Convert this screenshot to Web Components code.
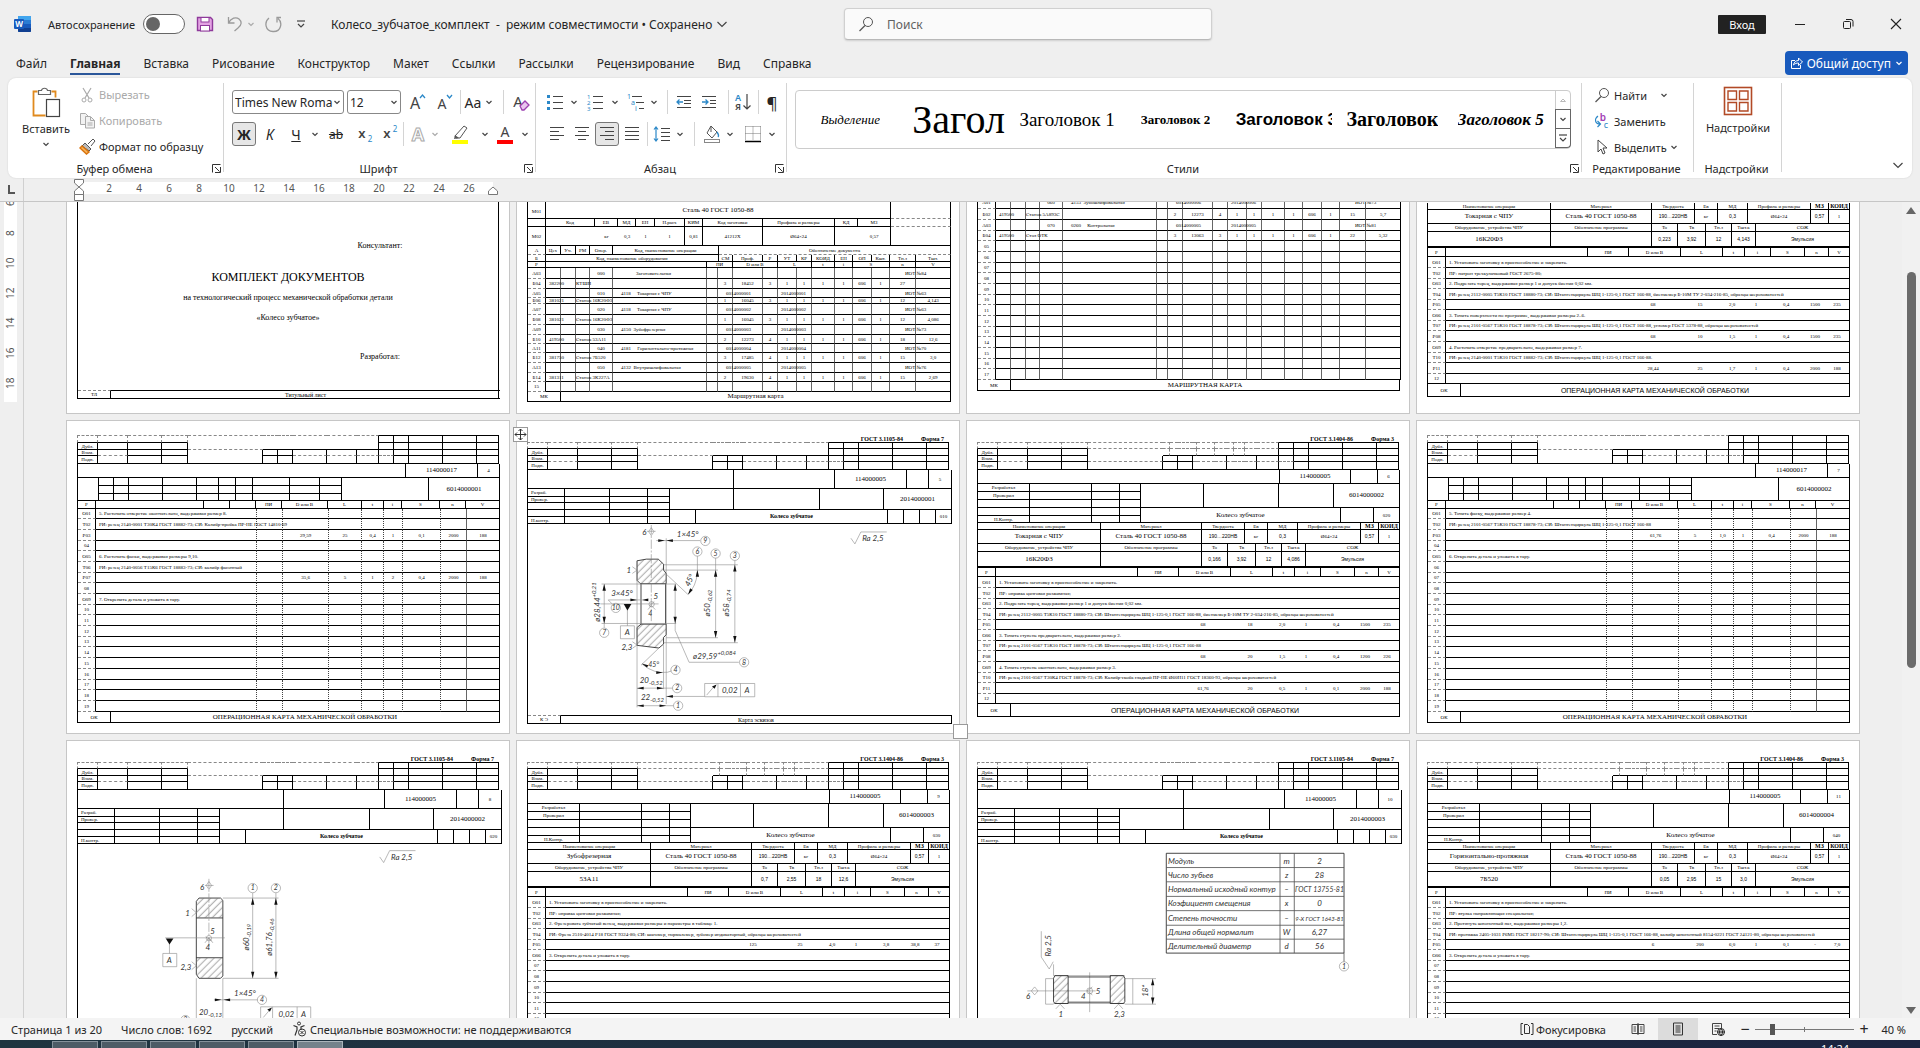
<!DOCTYPE html>
<html lang="ru">
<head>
<meta charset="utf-8">
<title>Колесо_зубчатое_комплект - Word</title>
<style>
html,body{height:100%}
body{margin:0;overflow:hidden;background:#efefef;font-family:"Noto Sans","Open Sans",sans-serif;font-size:12px;color:#262626}
</style>
</head>
<body>
<word-app></word-app>
<script>
const BASE = `*{box-sizing:border-box}button{font:inherit;color:inherit;background:none;border:0;padding:0;margin:0;display:inline-flex;align-items:center;justify-content:center}`;
class Base extends HTMLElement {
  connectedCallback() {
    if (this.shadowRoot) return;
    this.attachShadow({ mode: 'open' }).innerHTML = `<style>${BASE}${this.css()}</style>${this.html()}`;
  }
  css() { return ':host{display:block}'; }
  html() { return '<slot></slot>'; }
}
const def = (n, css, html) => customElements.define(n, class extends Base {
  css() { return typeof css === 'function' ? css(this) : css; }
  html() { return typeof html === 'function' ? html(this) : html; }
});

/* ---------- icons ---------- */
const G = '#444', B = '#2b88c8';
const lines = (a, c = G) => a.map(([x, y, w]) => `<path d="M${x} ${y}h${w}" stroke="${c}"/>`).join('');
const ICONS = {
  word: [18, 18, `<rect x="4" y="1" width="13" height="16" rx="1" fill="#2b7cd3"/><path d="M4 2a1 1 0 0 1 1-1h11a1 1 0 0 1 1 1v3H4z" fill="#41a5ee"/><path d="M4 9h13v4H4z" fill="#185abd"/><path d="M4 13h13v3a1 1 0 0 1-1 1H5a1 1 0 0 1-1-1z" fill="#103f91"/><rect x="0" y="4" width="10" height="10" rx="1" fill="#185abd"/><text x="5" y="12" font-size="8" font-weight="700" fill="#fff" text-anchor="middle" font-family="Open Sans,sans-serif">W</text>`],
  save: [18, 18, `<path d="M1.5 2.5h13l2 2v11h-15z" fill="#e3a3e3" stroke="#8f3a9b" stroke-width="1.4"/><rect x="5" y="2.5" width="8" height="4.5" fill="#fff" stroke="#8f3a9b"/><rect x="4.5" y="10.5" width="9" height="5.5" fill="#fff" stroke="#8f3a9b"/>`],
  undo: [18, 18, `<path d="M2.5 2v6h6M2.5 8C5 3 10 1.5 13 4s3 6-1 9l-3.5 3" stroke="#9a9a9a" stroke-width="1.3" fill="none"/>`],
  redo: [18, 18, `<path d="M5 3C0 7 1 16 9 16.5s10-9 5-13M13 7.5V2.500h4" stroke="#9a9a9a" stroke-width="1.3" fill="none"/>`],
  custom: [10, 10, `<path d="M1 2h8" stroke="${G}" stroke-width="1.2"/><path d="M2 5l3 3 3-3" stroke="${G}" stroke-width="1.2" fill="none"/>`],
  chev: [8, 8, `<path d="M1.5 3L4 5.500 6.500 3" stroke="${G}" stroke-width="1.2" fill="none"/>`],
  chevg: [8, 8, `<path d="M1.5 3L4 5.500 6.500 3" stroke="#aaa" stroke-width="1.2" fill="none"/>`],
  chevw: [8, 8, `<path d="M1.5 3L4 5.500 6.500 3" stroke="#fff" stroke-width="1.2" fill="none"/>`],
  chevl: [12, 12, `<path d="M1.5 4L6 8.500 10.500 4" stroke="${G}" stroke-width="1.2" fill="none"/>`],
  up: [8, 8, `<path d="M1.5 5.500L4 3l2.500 2.500z" stroke="#bbb" fill="none"/>`],
  search: [16, 16, `<circle cx="10" cy="6" r="4.5" stroke="#555" fill="none"/><path d="M7 9.500L1.500 15" stroke="#555" stroke-width="1.2"/>`],
  min: [12, 12, `<path d="M1 6.500h10" stroke="#222"/>`],
  restore: [12, 12, `<rect x="1.5" y="3.5" width="7" height="7" rx="1" fill="none" stroke="#222"/><path d="M4 1.500h5a2 2 0 0 1 2 2v5" fill="none" stroke="#222"/>`],
  close: [12, 12, `<path d="M1 1l10 10M11 1L1 11" stroke="#222" stroke-width="1.1"/>`],
  share: [13, 14, `<path d="M5 4.500H1.500v8h9V9M3.500 9C4 6 6 4.500 8.500 4.500V2l4 4-4 3.500V7C6.500 7 5 7.500 3.500 9z" fill="none" stroke="#fff"/>`],
  paste: [30, 31, `<path d="M6.500 4.500h-4v24h12M20.500 4.500h4v6" fill="none" stroke="#e08a1e" stroke-width="1.8"/><path d="M7.500 7.500v-4h3c.5-3 5.500-3 6 0h3v4z" fill="#fff" stroke="#666" stroke-width="1.2"/><rect x="15.5" y="12.5" width="13" height="17" fill="#fff" stroke="#444" stroke-width="1.2"/>`],
  cut: [14, 16, `<path d="M3 1l6 10M11 1L5 11" stroke="#aaa" stroke-width="1.2"/><circle cx="4" cy="13" r="2" fill="none" stroke="#aaa"/><circle cx="10" cy="13" r="2" fill="none" stroke="#aaa"/>`],
  copy: [17, 17, `<path d="M6 12.500H1.500v-11h5l3 3" fill="#f2f2f2" stroke="#aaa"/><path d="M6.500 4.500h5l4 4v7.500h-9z" fill="#f2f2f2" stroke="#aaa"/><path d="M11.500 5v3.500h4M8.500 11h5M8.500 13h5" stroke="#aaa" fill="none"/>`],
  brush: [17, 17, `<path d="M9 6l5-5 2 2-4 5" fill="#fff" stroke="#555"/><path d="M6 5l6 6-2 2-7-5z" fill="#bbb" stroke="#555"/><path d="M3 8l7 6-2.500 2L1 10z" fill="#f6b45c" stroke="#d9730d" stroke-width="1.4"/>`],
  grow: [18, 20, `<text x="7" y="17" font-size="16" fill="${G}" text-anchor="middle">A</text><path d="M12 6l2.500-3L17 6" stroke="${B}" fill="none" stroke-width="1.3"/>`],
  shrink: [18, 20, `<text x="7" y="17" font-size="14" fill="${G}" text-anchor="middle">A</text><path d="M12 3l2.500 3L17 3" stroke="${B}" fill="none" stroke-width="1.3"/>`],
  eraser: [18, 20, `<text x="6" y="15" font-size="15" fill="${G}" text-anchor="middle">A</text><path d="M8 14l5-5 4 4-5 5h-2z" fill="#e9c6ef" stroke="#9b3fb0" stroke-width="1.3"/>`],
  outA: [18, 18, `<text x="9" y="16" font-size="18" font-weight="700" fill="#fff" stroke="#aaa" text-anchor="middle">A</text>`],
  pen: [20, 20, `<path d="M5 12l9-10 3 2-7 10H6z" fill="#fff" stroke="#555"/><path d="M5 11l4 3-5 1z" fill="#555"/><rect x="2" y="16" width="16" height="4" fill="#ff0"/>`],
  redA: [20, 20, `<text x="10" y="13" font-size="14" fill="${G}" text-anchor="middle">A</text><rect x="2" y="16" width="16" height="4" fill="#f00"/>`],
  sub: [18, 20, `<text x="6" y="14" font-size="13" font-weight="600" fill="${G}" text-anchor="middle">x</text><text x="14" y="18" font-size="8" fill="${B}" text-anchor="middle">2</text>`],
  sup: [18, 20, `<text x="6" y="14" font-size="13" font-weight="600" fill="${G}" text-anchor="middle">x</text><text x="14" y="8" font-size="8" fill="${B}" text-anchor="middle">2</text>`],
  bullets: [18, 18, lines([[7, 3.5, 10], [7, 9.5, 10], [7, 15.5, 10]]) + `<path d="M1 2h3v3H1zM1 8h3v3H1zM1 14h3v3H1z" fill="${B}"/>`],
  numbers: [18, 18, lines([[7, 3.5, 10], [7, 9.5, 10], [7, 15.5, 10]]) + `<g font-size="6" fill="${B}"><text x="1" y="6">1</text><text x="1" y="12">2</text><text x="1" y="18">3</text></g>`],
  multi: [18, 18, lines([[5, 3.5, 10], [9, 9.5, 8], [12, 15.5, 5]]) + `<g font-size="7" fill="${B}"><text x="0" y="6">1</text><text x="4" y="12">a</text><text x="8" y="18">i</text></g>`],
  outdent: [16, 16, lines([[1, 2.5, 14], [8, 6.5, 7], [8, 9.5, 7], [1, 13.5, 14]]) + `<path d="M7 8H1M3.500 5.500L1 8l2.500 2.500" stroke="${B}" fill="none" stroke-width="1.3"/>`],
  indent: [16, 16, lines([[1, 2.5, 14], [9, 6.5, 6], [9, 9.5, 6], [1, 13.5, 14]]) + `<path d="M1 8h6M4.500 5.500L7 8l-2.500 2.500" stroke="${B}" fill="none" stroke-width="1.3"/>`],
  sort: [18, 20, `<text x="4" y="9" font-size="9" font-weight="600" fill="${B}" text-anchor="middle">А</text><text x="4" y="18" font-size="9" font-weight="600" fill="${G}" text-anchor="middle">Я</text><path d="M13 2v15M9.500 13.500L13 17l3.500-3.500" stroke="${G}" fill="none" stroke-width="1.2"/>`],
  al: [16, 16, lines([[1, 1.5, 14], [1, 5.5, 9], [1, 9.5, 14], [1, 13.5, 9]])],
  ac: [16, 16, lines([[1, 1.5, 14], [4, 5.5, 8], [1, 9.5, 14], [4, 13.5, 8]])],
  ar: [16, 16, lines([[1, 1.5, 14], [6, 5.5, 9], [1, 9.5, 14], [6, 13.5, 9]])],
  aj: [16, 16, lines([[1, 1.5, 14], [1, 5.5, 14], [1, 9.5, 14], [1, 13.5, 14]])],
  spacing: [18, 18, lines([[8, 3.5, 9], [8, 7.5, 9], [8, 11.5, 9], [8, 15.5, 9]]) + `<path d="M3 2v14M1 4.500L3 2l2 2.500M1 13.500L3 16l2-2.500" stroke="${B}" fill="none" stroke-width="1.2"/>`],
  bucket: [18, 20, `<path d="M8 2l6 6-5 6-5-5z" fill="#fff" stroke="#555"/><path d="M8 2v6" stroke="#555"/><path d="M14 8c2 3 2 4 1 5" stroke="${B}" fill="none" stroke-width="1.4"/><rect x="1.5" y="15.5" width="15" height="3" fill="#fff" stroke="#888"/>`],
  borders: [18, 18, `<path d="M1.500 1.500h15M1.500 8.500h15M1.500 1.500v14M9 1.500v14M16.500 1.500v14" stroke="#777" stroke-dasharray="1 1"/><path d="M1 16.500h16" stroke="#000" stroke-width="1.5"/>`],
  replace: [16, 18, `<text x="9" y="9" font-size="10" font-weight="600" fill="#a33fb5" text-anchor="middle">b</text><text x="12" y="16" font-size="9" fill="${B}" text-anchor="middle">c</text><path d="M4 4C0 7 1 12 6 12M3.500 9L6.500 12l-3 3" stroke="${B}" fill="none" stroke-width="1.2"/>`],
  cursor: [14, 16, `<path d="M3 1v12l3-3 2 5 2-1-2-5h4z" fill="#fff" stroke="#444"/>`],
  addins: [30, 30, `<rect x="1.5" y="1.5" width="27" height="27" fill="none" stroke="#b24a26" stroke-width="1.6"/><path d="M5 5h8.500v8.500H5zM16.500 5H25v8.500h-8.500zM5 16.500h8.500V25H5zM16.500 16.500H25V25h-8.500z" fill="none" stroke="#b24a26" stroke-width="1.4"/>`],
  launcher: [9, 9, `<path d="M.5 8.500v-8h8M3 3l4.500 4.500M8.500 3v5.500H3" stroke="#333" fill="none"/>`],
  access: [15, 16, `<circle cx="7" cy="2.5" r="1.5" fill="none" stroke="#333"/><path d="M1.500 4.500L5 6v3l-2 5.500M12.500 4.500L9 6v3" fill="none" stroke="#333" stroke-width="1.2"/><circle cx="10" cy="11.5" r="3.5" fill="none" stroke="#333"/><path d="M8.500 10l3 3m0-3l-3 3" stroke="#333"/>`],
  focus: [14, 14, `<path d="M3 1.500H1v11h2M11 1.500h2v11h-2" fill="none" stroke="#333"/><path d="M4.500 2.500h3l2 2v7h-5z" fill="none" stroke="#333"/>`],
  read: [14, 14, `<path d="M7 2.500H1v9h6zM7 2.500h6v9H7zM7 1v12M2.500 5H5M2.500 7H5M2.500 9H5M9 5h2.500M9 7h2.500M9 9h2.500" fill="none" stroke="#444"/>`],
  print: [12, 14, `<path d="M1.500 1h9v12h-9zM3.500 4h5M3.500 6h5M3.500 8h5M3.500 10h5" fill="none" stroke="#333"/>`],
  web: [14, 14, `<path d="M6 12.500H1.500v-11h9V6M3.500 4h5M3.500 6.500h5M3.500 9h2" fill="none" stroke="#444"/><circle cx="10" cy="10" r="3.5" fill="#efefef" stroke="#222"/><path d="M6.500 10h7M10 6.500c-2 2-2 5 0 7M10 6.500c2 2 2 5 0 7" stroke="#222" fill="none"/>`],
  move: [13, 13, `<path d="M6.500 1v11M1 6.500h11M4.500 3l2-2 2 2M4.500 10l2 2 2-2M3 4.500l-2 2 2 2M10 4.500l2 2-2 2" stroke="#333" fill="none"/>`],
  indents: [14, 22, `<path d="M2.500.5h9V4L7 8 2.500 4zM2.500 15.500V12L7 8l4.500 4v3.500zM2.500 15.500h9v6h-9z" fill="#fff" stroke="#777"/>`],
  rindent: [14, 22, `<path d="M2.500 15.500V12L7 8l4.500 4v3.500z" fill="#fff" stroke="#777"/>`]
};
def('ui-icon', ':host{display:inline-flex;flex:none}svg{display:block}', e => {
  const [w, h, s] = ICONS[e.getAttribute('name')];
  return `<svg width="${w}" height="${h}" viewBox="0 0 ${w} ${h}" fill="none" aria-hidden="true">${s}</svg>`;
});
const ic = n => `<ui-icon name="${n}"></ui-icon>`;

/* ---------- title bar ---------- */
def('title-bar', `:host{display:grid;grid-template-columns:844px minmax(200px,368px) 1fr;align-items:center;height:48px}
.l,.r{display:flex;align-items:center}.l{padding-left:14px;white-space:nowrap}.r{justify-content:flex-end}
.auto{display:flex;align-items:center;margin-left:16px;font-size:11px}.auto span{width:95px}
.auto input{appearance:none;margin:0;width:42px;height:20px;border:1px solid #666;border-radius:10px;background:#fff;display:flex;align-items:center;padding-left:2px}
.auto input:before{content:"";width:14px;height:14px;border-radius:50%;background:#666}
.save{margin-left:11px;width:18px}.un{margin-left:12px;width:18px}.c{width:14px}.re{width:18px;margin-left:6px}.cu{width:10px;margin-left:14px}
.doc{margin-left:25px;gap:4px}
.s{display:flex;align-items:center;height:32px;background:#fafafa;border:1px solid #d0d0d0;border-bottom-color:#b8b8b8;border-radius:4px;padding-left:13px;gap:13px;box-shadow:0 1px 2px #0002}
.s input{font:inherit;border:0;background:none;outline:0;flex:1;min-width:0;padding:0}.s input::placeholder{color:#616161;opacity:1}
.in{background:#222;color:#fff;width:48px;height:19px;margin-right:10px;border-radius:1px;font-size:11px}.w{width:48px;height:32px}`,
`<div class="l">${ic('word')}<label class="auto"><span>Автосохранение</span><input type="checkbox" aria-label="Автосохранение"></label><button class="save">${ic('save')}</button><button class="un">${ic('undo')}</button><button class="c">${ic('chevg')}</button><button class="re">${ic('redo')}</button><button class="cu">${ic('custom')}</button><button class="doc">Колесо_зубчатое_комплект&nbsp; -&nbsp; режим совместимости • Сохранено ${ic('chevl')}</button></div>
<label class="s">${ic('search')}<input type="text" placeholder="Поиск" aria-label="Поиск"></label>
<div class="r"><button class="in">Вход</button><button class="w">${ic('min')}</button><button class="w">${ic('restore')}</button><button class="w">${ic('close')}</button></div>`);

/* ---------- tabs ---------- */
def('ribbon-tabs', `:host{display:flex;align-items:center;height:30px;padding:0 12px 0 16px;gap:23px}
button{height:24px;border-bottom:2px solid transparent;white-space:nowrap;padding-top:2px}.on{font-weight:700;border-color:#2b579a}
.sh{margin-left:auto;background:#185abd;color:#fff;border:0;border-radius:4px;padding:0 5px;gap:4px}`,
`${['Файл', 'Главная', 'Вставка', 'Рисование', 'Конструктор', 'Макет', 'Ссылки', 'Рассылки', 'Рецензирование', 'Вид', 'Справка'].map(t => `<button class="${t === 'Главная' ? 'on' : ''}">${t}</button>`).join('')}<button class="sh">${ic('share')}Общий доступ${ic('chevw')}</button>`);

/* ---------- ribbon ---------- */
def('ribbon-group', `:host{display:flex;flex-direction:column;flex:none;padding-top:7px;margin:5px 0 1px;background:linear-gradient(#d4d4d4,#d4d4d4) right top/1px 89px no-repeat}
.b{flex:1;min-height:0}.f{display:grid;grid-template-columns:1fr auto 1fr;align-items:center;height:18px;padding-right:3px;font-size:11px}.f button{grid-column:3;justify-self:end}`,
  e => `<div class="b"><slot></slot></div><div class="f"><span></span><span>${e.getAttribute('label')}</span>${e.hasAttribute('launch') ? `<button>${ic('launcher')}</button>` : ''}</div>`);

def('clip-tools', `:host{display:flex;padding-left:14px;height:69px;font-size:11px}.p{display:flex;flex-direction:column;justify-content:flex-start;width:48px}.p ui-icon[name=chev]{margin-top:4px}
.p ui-icon[name=paste]{margin:-3px 0 3px}.c{display:flex;flex-direction:column;margin-left:8px;margin-top:-8px}.c button{height:26px;gap:3px;justify-content:flex-start}.c ui-icon{width:18px;justify-content:center}.c .g{color:#aaa}`,
`<button class="p">${ic('paste')}<span>Вставить</span>${ic('chev')}</button><div class="c"><button class="g">${ic('cut')}Вырезать</button><button class="g">${ic('copy')}Копировать</button><button>${ic('brush')}Формат по образцу</button></div>`);

const row = a => `<div class="r">${a.map(([w, h, c]) => h === '|' ? `<i style="width:${w}px"></i>` : `<button class="${c || ''}" style="width:${w}px">${h}</button>`).join('')}</div>`;
const TOOLCSS = `:host{display:flex;flex-direction:column;gap:8px}.r{display:flex;align-items:center;height:24px}i{height:24px;background:linear-gradient(#d4d4d4,#d4d4d4) center/1px 100% no-repeat}button{height:24px}.on{background:#e6e6e6;border:1px solid #777;border-radius:3px}`;
def('font-tools', TOOLCSS + `:host{padding-left:8px}.k{display:flex;align-items:center;height:24px;border:1px solid #888;border-radius:3px;margin-right:3px;padding:0 2px;overflow:hidden}
.k input{font:inherit;border:0;padding:0;min-width:0;flex:1;outline:0;color:inherit}.n{width:112px}.z{width:54px}.big{font-size:14px}.it{font-style:italic}.un{text-decoration:underline}.st{text-decoration:line-through}`,
`<div class="r"><div class="k n"><input value="Times New Roman" aria-label="Шрифт">${ic('chev')}</div><div class="k z"><input value="12" aria-label="Размер">${ic('chev')}</div>${row([[26, ic('grow')], [28, ic('shrink')], [4, '|'], [22, 'Aa', 'big'], [10, ic('chev')], [18, '|'], [18, ic('eraser')]])}</div>
${row([[24, '<b>Ж</b>', 'on big'], [28, 'К', 'big it'], [24, 'Ч', 'big un'], [14, ic('chev')], [28, 'ab', 'st'], [30, ic('sub')], [20, ic('sup')], [6, '|'], [24, ic('outA')], [10, ic('chevg')], [40, ic('pen')], [10, ic('chev')], [30, ic('redA')], [10, ic('chev')]])}`);
def('para-tools', TOOLCSS + `:host{padding-left:9px}.big{font-size:17px}`,
`${row([[20, ic('bullets')], [17, ic('chev')], [26, ic('numbers')], [13, ic('chev')], [29, ic('multi')], [8, ic('chev')], [18, '|'], [16, ic('outdent')], [34, ic('indent')], [4, '|'], [26, ic('sort')], [4, '|'], [24, '¶', 'big']])}
${row([[24, ic('al')], [26, ic('ac')], [24, ic('ar'), 'on'], [26, ic('aj')], [4, '|'], [26, ic('spacing')], [10, ic('chev')], [18, '|'], [18, ic('bucket')], [18, ic('chev')], [28, ic('borders')], [10, ic('chev')]])}`);
def('style-gallery', `:host{display:flex;height:59px;margin:0 11px 0 8px;border:1px solid #ccc;border-radius:4px}
.i{flex:1;min-width:0;height:57px;padding:0 6px;overflow:hidden;white-space:nowrap;color:#000;font-family:"Liberation Serif",serif;display:flex}
.i span{max-width:100%;overflow:hidden}.s1{font-size:13px;font-style:italic}.s2{font-size:40px}.s3{font-size:19px}.s4{font-size:13px;font-weight:700}.s5{font:700 17px "Liberation Sans",sans-serif}.s6{font-size:20px;font-weight:700}.s7{font-size:17px;font-weight:700;font-style:italic}
.a{display:flex;flex-direction:column;width:15px}.a button{flex:1;border:1px solid #666;margin-right:-1px}.a button:first-child{border:0;border-left:1px solid #ccc}.a button+button+button{border-top:0;border-radius:0 0 4px 0}`,
`${['Выделение', 'Загол', 'Заголовок 1', 'Заголовок 2', 'Заголовок 3', 'Заголовок', 'Заголовок 5'].map((t, i) => `<button class="i s${i + 1}"><span>${t}</span></button>`).join('')}<div class="a"><button>${ic('up')}</button><button>${ic('chev')}</button><button>${ic('custom')}</button></div>`);
def('edit-tools', `:host{display:flex;flex-direction:column;padding-left:11px;margin-top:-8px;font-size:11px}button{height:26px;justify-content:flex-start;gap:3px}ui-icon:first-child{width:18px;justify-content:center}.f ui-icon:last-child{margin-left:10px}`,
`<button class="f">${ic('search')}Найти${ic('chev')}</button><button>${ic('replace')}Заменить</button><button>${ic('cursor')}Выделить${ic('chev')}</button>`);
def('addin-tools', `:host{display:flex;justify-content:center;font-size:11px}button{flex-direction:column;gap:4px;margin-top:-4px}`, `<button>${ic('addins')}<span>Надстройки</span></button>`);
def('ribbon-bar', `:host{display:flex;height:100px;margin:0 8px;background:#fff;border-radius:8px;box-shadow:0 0 2px #0002}
.c{flex:none;width:130px;display:flex;align-items:flex-end;justify-content:flex-end;padding:0 8px 7px}`,
`<ribbon-group label="Буфер обмена" launch style="width:216px"><clip-tools></clip-tools></ribbon-group>
<ribbon-group label="Шрифт" launch style="width:312px"><font-tools></font-tools></ribbon-group>
<ribbon-group label="Абзац" launch style="width:251px"><para-tools></para-tools></ribbon-group>
<ribbon-group label="Стили" launch style="flex:1;min-width:0"><style-gallery></style-gallery></ribbon-group>
<ribbon-group label="Редактирование" style="width:112px"><edit-tools></edit-tools></ribbon-group>
<ribbon-group label="Надстройки" style="width:88px"><addin-tools></addin-tools></ribbon-group>
<div class="c"><button>${ic('chevl')}</button></div>`);

/* ---------- rulers ---------- */
def('ruler-top', `:host{display:flex;height:24px;border-bottom:1px solid #c6c6c6;font-size:10px;color:#555}
.c{width:24px;border-right:1px solid #d0d0d0;display:flex;align-items:center;justify-content:center}.c:before{content:"";width:5px;height:7px;border:solid #555;border-width:0 0 2px 2px}
.t{display:flex;height:12px;margin:4px -7px 0;width:414px;background:#fff;padding-left:15px;line-height:12px}.t span{width:30px;flex:none;text-align:center}
ui-icon{z-index:1;margin-top:1px}.a{margin-left:48px}`,
`<div class="c"></div><ui-icon name="indents" class="a"></ui-icon><div class="t">${Array.from({ length: 13 }, (_, i) => `<span>${2 * i + 2}</span>`).join('')}</div>${ic('rindent')}`);
def('ruler-left', `:host{display:block;width:24px;border-right:1px solid #d0d0d0;font-size:10px;color:#555}
.t{width:13px;height:200px;margin-left:4px;background:#fff;writing-mode:vertical-rl;overflow:hidden;line-height:13px}.t div{transform:rotate(180deg);display:flex;height:210px;padding-top:14px}.t span{height:30px;flex:none;text-align:center}`,
`<div class="t"><div>${[18, 16, 14, 12, 10, 8, 6].map(n => `<span>${n}</span>`).join('')}</div></div>`);

/* ---------- document forms ---------- */
const T = (b, rows, cls = '') => `<table class="${cls}"><colgroup>${b.slice(1).map((x, i) => `<col style="width:${x - b[i]}px">`).join('')}</colgroup>${rows.map(([h, cells]) => `<tr style="height:${h}px">${cells.map(c => { const [t, k, cs, rs] = Array.isArray(c) ? c : [c]; return `<td${k ? ` class="${k}"` : ''}${cs > 1 ? ` colspan="${cs}"` : ''}${rs > 1 ? ` rowspan="${rs}"` : ''}>${t}</td>`; }).join('')}</tr>`).join('')}</table>`;
const E = n => Array(n).fill('');

const stamp = (hs, wide) => {
  const b = wide ? [17, 38, 68, 102, 128, 203, 210, 218, 233, 237, 255, 267, 274, 285, 297, 319, 334, 349, 383, 417, 439] : [17, 38, 68, 102, 128, 203, 218, 233, 267, 297, 319, 334, 349, 383, 417, 439];
  const n = b.length - 1;
  const spec = wide ? [
    ['ssssdddddddddddsssss', 'ddddndnnddnddnssssss'], ['ssssnsssssssssssssss', 'ssssndnnddnddnssssss'],
    ['sdssdsssddddddddssss', 'sssssnssnnsnnsssssss'], ['s'.repeat(20), 'sssssnssnnsnnsssssss']] : [
    ['ssssnnnnnnsssss', 'ddddnnnnnssssss'], ['ssssdssssssssss', 'ssssnnnnnssssss'],
    ['sdssnssddddssss', 'sssssssssssssss'], ['sssssssssssssss', 'sssssssssssssss']];
  const lab = ['', 'Дубл.', 'Взам.', 'Подп.'];
  return T(b, spec.map(([bo, ri], r) => [hs[r], Array.from({ length: n }, (_, i) => [i ? '' : lab[r], `b${bo[i]} r${ri[i]}${r ? '' : i < n - 5 ? ' td' : ' ts'}${i ? '' : r ? ' ls' : ' ld'}`])]), 'stamp');
};
const gost = (a, f) => `<div class="gost"><span>${a}</span><span>Форма ${f}</span></div>`;
const RH = [10, 11, 11, 10, 11, 11, 10, 11, 11, 10, 11, 11, 10, 11, 11, 11, 10, 11, 11];

/* continuation sheet of an operation card */
const formA = ({ sheet, code, rows }) => `<div class="top14"></div>${stamp([8, 7, 6, 8])}<div class="fr">
${T([17, 345, 417, 439], [[14, ['', ['114000017', 'm'], sheet]]])}
${T([17, 38, 53, 68, 102, 136, 158, 175, 192, 229, 259, 281, 368, 439], [[8, [['', '', 1, 3], ...E(10), ['', '', 1, 3], [code, 'm', 1, 3]]], [8, E(10)], [7, E(10)]])}
${T([17, 35, 143, 169, 195, 221, 267, 301, 323, 341, 379, 405, 439], [[8, ['Р', '', '', '', 'ПИ', 'D или В', 'L', 't', 'i', 'S', 'n', 'V']]])}
${T([17, 35, 196, 222, 268, 301, 323, 342, 380, 406, 439], RH.map((h, i) => { const [l, t, v = E(7)] = rows[i] || [String(i + 1).padStart(2, '0'), '']; return [h, [[l, 'bd'], [t, 'l dt'], ['', 'dt'], ...v.map((x, j) => [x, j < 5 ? 'dt' : j === 5 ? 'gr' : ''])]]; }))}
${T([17, 50, 439], [[11, ['ОК', ['ОПЕРАЦИОННАЯ КАРТА МЕХАНИЧЕСКОЙ ОБРАБОТКИ', 'm']]]])}</div>`;

/* sketch card */
const formB = ({ sheet, code, op, draw }) => `${gost('ГОСТ 3.1105-84', 7)}${stamp([7, 7, 6, 8])}<div class="fr">
${T([17, 223, 324, 396, 418, 441], [[19, ['', '', ['114000005', 'm'], '', sheet]]])}
${T([17, 54, 99, 137, 159, 223, 309, 373, 441], [[8, [['Разраб.', 'l'], ...E(3), ['', '', 1, 3], ['', '', 1, 3], ['', '', 1, 3], [code, 'm', 1, 3]]], [6, [['Провер.', 'l'], ...E(3)]], [7, E(4)]])}
${T([17, 54, 99, 137, 159, 185, 377, 393, 409, 425, 441], [[7, [...E(4), ['', '', 1, 2], ['Колесо зубчатое', 'b', 1, 2], ['', '', 1, 2], ['', '', 1, 2], ['', '', 1, 2], [op, '', 1, 2]]], [7, [['Н.контр.', 'l'], ...E(3)]]])}
<svg class="draw" viewBox="54 327 1268 576">${draw}</svg>
${T([17, 50, 441], [[9, [['К Э', 'td'], ['Карта эскизов', 'm2 ts']]]])}</div>`;

/* operation card, first sheet */
const formC = ({ sheet, code, op, name, mach, t, rows, blank }) => `${blank ? '<div class="skip"></div>' : gost('ГОСТ 3.1404-86', 3) + stamp([7, 7, 6, 8], true)}<div class="fr">
${blank ? '' : T([17, 319, 390, 417, 439], [[14, ['', ['114000005', 'm'], '', sheet]]]) +
T([17, 69, 131, 159, 180, 243, 318, 373, 439], [[8, ['Разработал', ...E(3), ['', '', 1, 3], ['', '', 1, 3], ['', '', 1, 3], [code, 'm', 1, 3]]], [8, ['Проверил', ...E(3)]], [8, E(4)]]) +
T([17, 69, 131, 159, 180, 380, 413, 439], [[8, [...E(4), ['Колесо зубчатое', 'm', 1, 2], ['', '', 1, 2], [op, '', 1, 2]]], [7, ['Н.Контр.', ...E(3)]]])}
${T([17, 140, 241, 284, 307, 337, 400, 418, 439], [[7, ['Наименование операции', 'Материал', 'Твердость', 'Ев', 'МД', 'Профиль и размеры', ['МЗ', 'b'], ['КОИД', 'b']]], [14, [[name, 'm'], ['Сталь 40 ГОСТ 1050-88', 'm'], ['190…220НВ', 'sa'], 'кг', ['0,3', 'sa'], 'Ø64×24', ['0,57', 'sa'], '1']]])}
${T([17, 140, 241, 267, 295, 321, 345, 439], [[8, ['Оборудование, устройства ЧПУ', 'Обозначение программы', 'То', 'Тв', 'Тп.з', 'Тшт.к', 'СОЖ']], [16, [[mach, 'm th'], ['', 'th'], ...t.map(x => [x, 'sa th']), ['Эмульсия', 'sa th']]]])}
${T([17, 35, 177, 218, 270, 312, 334, 360, 394, 418, 439], [[9, ['Р', '', 'ПИ', 'D или В', 'L', 't', 'i', 'S', 'n', 'V']],
...[11, 11, 10, 11, 10, 11, 10, 11, 11, 10, 11, 10].map((h, i) => { const [l, s, v] = rows[i] || [String(i + 1).padStart(2, '0'), '']; return [h, v ? [[l, 'bd'], ['', 'rn', 2], ...v.map((x, j) => [x, 'pr' + (j < 6 ? ' rn' : '')])] : [[l, i < 11 ? 'bd' : ''], [s, 'l', 9]]]; })])}
${T([17, 50, 439], [[13, ['ОК', ['ОПЕРАЦИОННАЯ КАРТА МЕХАНИЧЕСКОЙ ОБРАБОТКИ', 'm sf']]]])}</div>`;

/* route card rows */
const RB = [17, 35, 50, 65, 79, 102, 196, 207, 222, 252, 267, 286, 301, 324, 342, 361, 379, 405, 440];
const route = (rows, hs) => T(RB, hs.map((h, i) => {
  const r = rows[i], g = 'gr', c = Array.from({ length: 18 }, () => ['', g]);
  c[17] = ['', '']; c[0] = [r ? r[0] : '', 'bd'];
  if (r && r[1] === 'A') { c[4] = [r[2], g]; c[5] = [r[3], 'gr p8']; c[7] = [r[4], 'gr p8']; c[10] = [r[5], 'gr p3']; c[16] = [r[6], 'gr p15']; }
  if (r && r[1] === 'B') { c[1] = [r[2], 'gr p3']; c[3] = [r[3], 'gr p0']; r[4].forEach((x, j) => c[7 + j] = [x, j === 10 ? '' : g]); }
  return [h, c];
}));
const A = (l, op, n, a, b, iot) => [l, 'A', op, n, a, b, iot], Bq = (l, c, n, v) => [l, 'B', c, n, v];
const N = '&nbsp;';
const formR = `<div class="fr rt">
${T([17, 35, 380, 440], [[30, [['М01', 'low'], ['Сталь 40 ГОСТ 1050-88', 'm low'], ['', 'bd']]]])}
${T([17, 35, 84, 107, 125, 144, 174, 192, 252, 324, 347, 380, 440], [[8, ['', 'Код', 'ЕВ', 'МД', 'ЕН', 'Н.расх', 'КИМ', 'Код заготовки', 'Профиль и размеры', 'КД', 'МЗ', ['', 'bd']]], [19, ['М02', ['', 'rn'], ['кг', 'rn'], ['0,3', 'rn'], ['1', 'rn'], '1', '0,81', '41212Х', 'Ø64×24', ['', 'rn'], '0,57', '']]])}
${T([17, 35, 50, 65, 79, 102, 208, 440], [[9, [['А', 'bd'], 'Цех', 'Уч.', 'РМ', 'Опер.', 'Код, наименование операции', ['Обозначение документа', 'bd']]]])}
${T([17, 35, 208, 222, 252, 267, 286, 301, 324, 342, 361, 379, 405, 440], [[7, ['Б', 'Код, наименование оборудования', 'СМ', 'Проф.', 'Р', 'УТ', 'КР', 'КОИД', 'ЕН', 'ОП', 'Кшт.', 'Тп.з', 'Тшт.']]])}
${T([17, 35, 196, 222, 267, 301, 324, 342, 379, 405, 440], [[6, ['Р', '', 'ПИ', 'D или В', 'L', 't', 'i', 'S', 'n', 'V']]])}
${route([A('А03', '000', N.repeat(12) + 'Заготовительная', '', '', 'ИОТ №84'), Bq('Б04', '382200', 'КТШП', ['3', '18452', '3', '1', '1', '1', '1', '606', '1', '27', '']),
A('А05', '010', '4118' + N.repeat(5) + 'Токарная с ЧПУ', '6014000001', '2014000001', 'ИОТ №63'), Bq('Б06', '381021', 'Станок 16К20Ф3', ['1', '16045', '3', '1', '1', '1', '1', '606', '1', '12', '4,143']),
A('А07', '020', '4118' + N.repeat(5) + 'Токарная с ЧПУ', '6014000002', '2014000002', 'ИОТ №63'), Bq('Б08', '381021', 'Станок 16К20Ф3', ['1', '16045', '3', '1', '1', '1', '1', '606', '1', '12', '4,086']),
A('А09', '030', '4150' + N.repeat(2) + 'Зубофрезерная', '6014000003', '2014000003', 'ИОТ №73'), Bq('Б10', '419500', 'Станок 53А11', ['2', '12273', '4', '1', '1', '1', '1', '606', '1', '18', '12,6']),
A('А11', '040', '4181' + N.repeat(5) + 'Горизонтально-протяжная', '6014000004', '2014000004', 'ИОТ №70'), Bq('Б12', '381750', 'Станок 7Б520', ['3', '17485', '4', '1', '1', '1', '1', '606', '1', '15', '3,0']),
A('А13', '050', '4132' + N.repeat(2) + 'Внутришлифовальная', '6014000005', '2014000005', 'ИОТ №76'), Bq('Б14', '381311', 'Станок 3К227А', ['2', '19630', '4', '1', '1', '1', '1', '606', '1', '15', '2,69']), ['15']],
[11, 10, 9, 6, 11, 10, 10, 9, 9, 10, 10, 9, 10])}
${T([17, 50, 440], [[10, ['МК', ['Маршрутная карта', 'm']]]])}</div>`;
const formR2 = `<div class="fr rt2">
${route([A('А01', '060', '4153' + N.repeat(2) + 'Зубошлифовальная', '6014000006', '2014000006', 'ИОТ №73'), Bq('Б02', '419500', 'Станок 5А893С', ['2', '12273', '4', '1', '1', '1', '1', '606', '1', '15', '5,7']),
A('А03', '070', '0260' + N.repeat(5) + 'Контрольная', '6014000005', '2014000005', 'ИОТ №81'), Bq('Б04', '419500', 'Стол ОТК', ['3', '13063', '3', '1', '1', '1', '1', '606', '1', '22', '5,32']),
...Array.from({ length: 13 }, (_, i) => [String(i + 5).padStart(2, '0')])], [12, 11, 11, 10, 11, 11, 10, 11, 11, 10, 11, 11, 10, 11, 11, 10, 11])}
${T([17, 50, 439], [[11, ['МК', ['МАРШРУТНАЯ КАРТА', 'm']]]])}</div>`;
const title = `<div class="fr ti"><div class="tt"><p class="k">Консультант:</p><h1>КОМПЛЕКТ ДОКУМЕНТОВ</h1><p>на технологический процесс механической обработки детали</p><p>«Колесо зубчатое»</p><p class="z">Разработал:</p></div>
${T([17, 50, 439], [[9, [['ТЛ', 'td'], ['Титульный лист', 'm2 ts']]]])}</div>`;

/* ---------- drawings ---------- */
const tx = (x, y, s, t, k = '') => `<text x="${x}" y="${y}" font-size="${s}" ${k}>${t}</text>`;
const rot = (x, y, s, t, sub) => `<text transform="translate(${x} ${y}) rotate(-90)" font-size="${s}">${t}${sub || ''}</text>`;
const ball = (x, y, n) => `<circle cx="${x}" cy="${y}" r="14"/>${tx(x, y + 7, 21, n, 'text-anchor="middle"')}`;
const ah = (x, y, d) => { const p = { u: 'l-5 20h10z', d: 'l-5 -20h10z', l: 'l20 -4v8z', r: 'l-20 -4v8z' }[d]; return `<path class="f" d="M${x} ${y}${p}"/>`; };
const ts = (s, dy = 6) => `<tspan font-size="18" dy="${dy}">${s}</tspan>`;
const hatch = `<defs><pattern id="h" width="15" height="15" patternUnits="userSpaceOnUse" patternTransform="rotate(45)"><path d="M7 0v15" stroke="#777" stroke-width="2"/></pattern></defs>`;
const ra = (x, y) => `<path d="M${x} ${y}l12 17 18-36h78"/>${tx(x + 34, y + 9, 24, 'Ra 2,5')}`;
const D1 = hatch + ra(1027, 370) + `
<path class="k" fill="url(#h)" d="M382 438l28-5h36l16 15v18l8 10v31h-78l-10-10z"/><path class="k" fill="url(#h)" d="M394 629h76v32l-8 8v20l-14 12-66-8v-54z"/>
<path class="k" d="M394 507v122M468 507v122"/><path d="M470 370v500M382 438v442M462 690v135"/>
<path d="M425 330v290" stroke-dasharray="28 5 6 5"/><path d="M425 338l8 12-8 12-8-12zM412 349h26"/>
<path d="M440 377h132M275 508h225M275 627h225M295 556h98M272 568h175M462 450h224M462 466h164M462 685h224M470 670h156"/>
${ah(470, 377, 'l')}${ah(466, 377, 'r')}${ah(382, 556, 'r')}${ah(396, 556, 'l')}
<path d="M283 508v132M497 508v140l42 96h150M564 424v50M619 430v240M677 437v248M470 478l66 62M564 474q-4 42-28 64M448 701l-54 52M398 750q36 30 76 24l12-4M382 822h107M382 875h110M470 847h116M353 586v48M295 556l12 12"/>
${ah(283, 508, 'u')}${ah(283, 627, 'd')}${ah(497, 508, 'u')}${ah(497, 627, 'd')}${ah(619, 466, 'u')}${ah(619, 670, 'd')}${ah(677, 450, 'u')}${ah(677, 685, 'd')}
${ah(564, 466, 'u')}<path class="f" d="M536 540l14-14-8-5zM396 748l16 12 4-7z"/>${ah(460, 775, 'r')}${ah(382, 822, 'l')}${ah(462, 822, 'r')}${ah(382, 875, 'l')}${ah(470, 875, 'r')}${ah(470, 847, 'l')}
<path class="f" d="M342 568h23l-12 20z"/><path d="M332 634h42v39h-42zM586 808h151v40H586zM626 808v40M694 808v40M592 843l24-28"/><path class="f" d="M622 811l-14 6 8 7z"/>
<path d="M368 456l14 10-14 10M368 682l14 10-14 10M415 585l10-12 12 12M418 575l16-14"/><circle cx="426" cy="569" r="8"/>
${ball(588, 378, 9)}${ball(564, 410, 6)}${ball(619, 416, 5)}${ball(677, 423, 3)}${ball(318, 580, 10)}${ball(283, 655, 7)}${ball(705, 744, 8)}${ball(498, 767, 4)}${ball(503, 822, 2)}${ball(506, 875, 1)}
${tx(398, 359, 24, '6')}${tx(502, 366, 24, '1×45°')}${tx(350, 475, 24, '1')}${tx(304, 544, 24, '3×45°')}${tx(432, 553, 24, '5')}${tx(416, 604, 21, '4')}${tx(345, 662, 24, 'А')}${tx(335, 706, 24, '2,3')}${tx(416, 758, 21, '45°')}
<text transform="translate(540 517) rotate(-65)" font-size="24">45°</text>
${rot(270, 622, 24, 'ø28,44', ts('+0,21', -12))}${rot(601, 606, 24, 'ø50', ts('-0,62'))}${rot(660, 606, 24, 'ø58', ts('-0,74'))}
<text x="551" y="733" font-size="24">ø29,59${ts('+0,084', -12)}</text><text x="390" y="806" font-size="24">20${ts('-0,52')}</text><text x="394" y="858" font-size="24">22${ts('-0,52')}</text>${tx(638, 838, 24, '0,02')}${tx(706, 838, 24, 'А')}`;
const D2 = hatch + ra(963, 366) + `
<path class="k" d="M418 490h65l7 7v228l-7 7h-65l-8-12V500zM410 550h80M410 670h80"/><path fill="url(#h)" stroke="none" d="M418 490h65l7 7v53h-80v-50zM410 670h80v55l-7 7h-65l-8-12z"/>
<path d="M448 432v218" stroke-dasharray="28 5 6 5"/><path d="M448 440l8 12-8 12-8-12zM436 452h26"/>
<path d="M490 490h168M490 732h168M580 475v257M650 475v257M316 610h180M329 628v29M309 657h42v40h-42zM410 732v170M490 732v170M463 797h132M396 522l14 12-14 12M396 682l14 12-14 12M436 625l12-15 12 15M438 607l18 12"/><circle cx="448" cy="611" r="8"/>
${ah(580, 490, 'u')}${ah(580, 732, 'd')}${ah(650, 490, 'u')}${ah(650, 732, 'd')}${ah(492, 797, 'l')}${ah(486, 797, 'r')}<path class="f" d="M318 612h23l-12 18z"/>
${ball(580, 460, 1)}${ball(650, 460, 2)}${ball(608, 797, 4)}${ball(377, 858, 3)}<path d="M604 818h151v40H604zM640 818v40M714 818v40M612 850l24-28M410 870h80"/><path class="f" d="M638 820l-14 6 8 7z"/>
${tx(421, 466, 24, '6')}${tx(377, 545, 24, '1')}${tx(452, 598, 24, '5')}${tx(438, 647, 24, '4')}${tx(321, 686, 24, 'А')}${tx(362, 708, 24, '2,3')}${tx(524, 786, 24, '1×45°')}
${rot(568, 648, 24, 'ø60', ts('-0,19'))}${rot(638, 664, 24, 'ø61,76', ts('-0,46'))}<text x="418" y="844" font-size="24">20${ts('-0,13')}</text>${tx(658, 848, 24, '0,02')}${tx(726, 848, 24, 'А')}`;
const D3 = hatch + `<path class="k" d="M621 355h536v301H621z"/><path class="g" d="M621 398h536M621 441h536M621 485h536M621 528h536M621 572h536M621 614h536M964 355v301M1007 355v301M1157 656v26"/>${ball(1157, 696, 1)}
${[['Модуль', 'm', '2'], ['Число зубьев', 'z', '28'], ['Нормальный исходный контур', '–', 'ГОСТ 13755-81'], ['Коэфициент смещения', 'x', '0'], ['Степень точности', '–', '9-Х ГОСТ 1643-81'], ['Длина общей нормалит', 'W', '6,27'], ['Делительный диаметр', 'd', '56']].map((r, i) => tx(626, 386 + i * 43, 24, r[0]) + tx(984, 386 + i * 43, 24, r[1], 'text-anchor="middle"') + tx(1083, 386 + i * 43, r[2].length > 13 ? 18 : r[2].length > 5 ? 21 : 24, r[2], 'text-anchor="middle"')).join('')}
${rot(272, 666, 24, 'Ra 2,5')}<path d="M244 590v78l24 36 12-22M281 690v34M281 724h215M281 808h215M257 733h24M257 810h24M496 733h94M496 810h94M257 733v77M520 733v77M580 733v77M202 770h206M390 714v120M224 758l10 12-10 12-10-12z"/>
<path class="k" fill="url(#h)" d="M285 724h40v84h-40l-4-6v-70zM452 724h40l4 8v70l-4 6h-40z"/><path class="k" d="M325 728h127M325 804h127"/><circle cx="390" cy="770" r="9"/><path d="M398 758l-16 12 16 12M288 824l13-14 13 14M464 824l13-14 13 14"/>
${ah(580, 733, 'u')}${ah(580, 810, 'd')}${rot(566, 788, 24, '18*')}${tx(198, 793, 24, '6')}${tx(408, 778, 24, '5')}${tx(364, 793, 24, '4')}${tx(296, 850, 24, '1')}${tx(463, 850, 24, '2,3')}`;

const o1 = '1. Установить заготовку в приспособление и закрепить.';
const T45 = 'РИ: резец 2112-0005 Т5К10 ГОСТ 18880-73; СИ: Штангенциркуль ШЦ 1-125-0,1 ГОСТ 166-88, биениемер Б-10М ТУ 2-034-216-85, образцы шероховатостей';
const end = '3. Открепить деталь и уложить в тару.';
const PAGES = [title, formR, formR2,
  formC({ blank: 1, name: 'Токарная с ЧПУ', mach: '16К20Ф3', t: ['0,223', '3,92', '12', '4,143'], rows: [['О01', o1], ['Т02', 'ПР: патрон трехкулачковый ГОСТ 2675-80;'], ['О03', '2. Подрезать торец, выдерживая размер 1 и допуск биения 0,02 мм.'], ['Т04', T45], ['Р05', '', ['68', '15', '2,0', '1', '0,4', '1500', '235']], ['О06', '3. Точить поверхности по программе, выдерживая размеры 2..6.'], ['Т07', 'РИ: резец 2101-0567 Т5К10 ГОСТ 18878-73; СИ: Штангенциркуль ШЦ 1-125-0,1 ГОСТ 166-88, угломер ГОСТ 5378-88, образцы шероховатостей'], ['Р08', '', ['68', '10', '1,5', '1', '0,4', '1500', '235']], ['О09', '4. Расточить отверстие предварительно, выдерживая размер 7.'], ['Т10', 'РИ: резец 2140-0001 Т5К10 ГОСТ 18882-73; СИ: Штангенциркуль ШЦ 1-125-0,1 ГОСТ 166-88.'], ['Р11', '', ['28,44', '25', '1,7', '1', '0,4', '2000', '188']]] }),
  formA({ sheet: '4', code: '6014000001', rows: [['О01', '5. Расточить отверстие окончательно, выдерживая размер 8.'], ['Т02', 'РИ: резец 2140-0001 Т30К4 ГОСТ 18882-73; СИ: Калибр-пробка ПР-НЕ ГОСТ 14810-69'], ['Р03', '', ['29,59', '25', '0,4', '1', '0,1', '2000', '188']], ['04', ''], ['О05', '6. Расточить фаски, выдерживая размеры 9,10.'], ['Т06', 'РИ: резец 2140-0056 Т15К6 ГОСТ 18883-73; СИ: калибр фасочный'], ['Р07', '', ['35,6', '5', '1', '2', '0,4', '2000', '188']], ['08', ''], ['О09', '7. Открепить деталь и уложить в тару.']] }),
  formB({ sheet: '5', code: '2014000001', op: '010', draw: D1 }),
  formC({ sheet: '6', code: '6014000002', op: '020', name: 'Токарная с ЧПУ', mach: '16К20Ф3', t: ['0,166', '3,92', '12', '4,086'], rows: [['О01', o1], ['Т02', 'ПР: оправка цанговая разжимная;'], ['О03', '2. Подрезать торец, выдерживая размер 1 и допуск биения 0,02 мм.'], ['Т04', T45], ['Р05', '', ['68', '18', '2,0', '1', '0,4', '1500', '235']], ['О06', '3. Точить ступень предварительно, выдерживая размер 2.'], ['Т07', 'РИ: резец 2101-0567 Т5К10 ГОСТ 18878-73; СИ: Штангенциркуль ШЦ 1-125-0,1 ГОСТ 166-88'], ['Р08', '', ['68', '20', '1,5', '1', '0,4', '1200', '226']], ['О09', '4. Точить ступень окончательно, выдерживая размер 3.'], ['Т10', 'РИ: резец 2101-0567 Т30К4 ГОСТ 18878-73; СИ: Калибр-скоба гладкий ПР-НЕ Ø60Н11 ГОСТ 18360-93, образцы шероховатостей'], ['Р11', '', ['61,76', '20', '0,5', '1', '0,1', '2000', '188']]] }),
  formA({ sheet: '7', code: '6014000002', rows: [['О01', '5. Точить фаску, выдерживая размер 4.'], ['Т02', 'РИ: резец 2101-0567 Т5К10 ГОСТ 18878-73; СИ: Штангенциркуль ШЦ 1-125-0,1 ГОСТ 166-88'], ['Р03', '', ['61,76', '5', '1,0', '1', '0,4', '2000', '188']], ['04', ''], ['О05', '6. Открепить деталь и уложить в тару.']] }),
  formB({ sheet: '8', code: '2014000002', op: '020', draw: D2 }),
  formC({ sheet: '9', code: '6014000003', op: '030', name: 'Зубофрезерная', mach: '53А11', t: ['0,7', '2,55', '18', '12,6'], rows: [['О01', o1], ['Т02', 'ПР: оправка цанговая разжимная;'], ['О03', '2. Фрезеровать зубчатый венец, выдерживая размеры и параметры в таблице 1.'], ['Т04', 'РИ: Фреза 2510-4014 Р18 ГОСТ 9324-80; СИ: шагомер, нормалемер, зубомер индикаторный, образцы шероховатостей'], ['Р05', '', ['125', '25', '4,0', '1', '3,8', '38,8', '37']], ['О06', end]] }),
  formB({ sheet: '10', code: '2014000003', op: '030', draw: D3 }),
  formC({ sheet: '11', code: '6014000004', op: '040', name: 'Горизонтально-протяжная', mach: '7Б520', t: ['0,05', '2,95', '15', '3,0'], rows: [['О01', o1], ['Т02', 'ПР: втулка направляющая специальная;'], ['О03', '2. Протянуть шпоночный паз, выдерживая размеры 1,2.'], ['Т04', 'РИ: протяжка 2405-1031 Р6М5 ГОСТ 18217-90; СИ: Штангенциркуль ШЦ 1-125-0,1 ГОСТ 166-88, калибр шпоночный 8154-0221 ГОСТ 24121-80, образцы шероховатостей'], ['Р05', '', ['6', '200', '6,0', '1', '0,1', '-', '7,0']], ['О06', end]] })];
def('doc-page', `:host{display:block;width:444px;height:314px;background:#fff;border:1px solid #c6c6c6;padding:0 10px;font:5px/5px "Liberation Serif",serif;color:#000;overflow:hidden}
table{width:100%;table-layout:fixed;border-collapse:separate;border-spacing:0;font:inherit}
td{padding:0;height:inherit;text-align:center;vertical-align:middle;white-space:nowrap;border:solid #000;border-width:0 1px 1px 0}
.top14{height:14px}.skip{height:102px}.gost{height:21px;padding:16px 5px 0 0;display:flex;justify-content:flex-end;gap:18px;font:bold 6px/5px "Liberation Serif",serif}
.fr{border-left:1px solid #000}.bd{border-bottom:1px dashed #888}.bn{border-bottom-width:0}.rd{border-right:1px dashed #888}.rn{border-right-width:0}
.td{border-top:1px dashed #888}.ts{border-top:1px solid #000}.ls{border-left:1px solid #000}.ld{border-left:1px dashed #888}
.l{text-align:left;padding-left:3px}.p0,.p3,.p8,.p15{text-align:left}.p3{padding-left:3px}.p8{padding-left:8px}.p15{padding-left:15px}.pr{padding-right:4px}
.dt{border-right:1px dotted #444}.gr{border-right-color:#666}.th{border-bottom-width:2px}
.m{font-size:7px;line-height:7px}.m2{font-size:6px;line-height:6px}.b{font-weight:700;font-size:6px}.sa,.sf{font-family:"Liberation Sans",sans-serif}.low{vertical-align:bottom;padding-bottom:4px}
.draw{display:block;width:100%;height:191px;fill:none;stroke:#888;stroke-width:1.8}.draw text{fill:#333;stroke:none;font-family:Lato,"Liberation Sans",sans-serif;font-style:italic}.draw .f{fill:#111;stroke:none}.draw .k{stroke:#222;stroke-width:2.5}.draw .g{stroke:#555;stroke-width:2.5}
.rt{padding-top:88px}.rt2{padding-top:96px}.ti{border-right:1px solid #000;padding-top:99px}.ti table td:last-child{border-right:0}.tt{height:190px;display:flex;flex-direction:column;text-align:center;font-size:8px;line-height:10px;padding-top:41px}.tt p,.tt h1{margin:0}.tt h1{font-weight:400;font-size:12px;line-height:14px;margin:19px 0 9px}.tt p+p{margin-top:10px}.tt .k{padding-left:184px}.tt .z{padding-left:184px;margin-top:29px}`,
  e => PAGES[+e.getAttribute('n')]);
def('doc-canvas', `:host{flex:1;min-width:0;overflow:hidden;position:relative;display:grid;grid-template-columns:repeat(auto-fill,444px);gap:6px;justify-content:center;align-content:start}
doc-page[n="0"],doc-page[n="1"],doc-page[n="2"],doc-page[n="3"]{margin-top:-102px}
.w{position:relative}.h{position:absolute;left:-3px;top:7px;width:15px;height:15px;background:#fff;border:1px solid #999}.z{position:absolute;right:-8px;bottom:-5px;width:15px;height:15px;background:#fff;border:1px solid #999;z-index:1}`,
`${PAGES.map((_, i) => i === 5 ? `<div class="w"><doc-page n="5"></doc-page><button class="h" aria-label="Переместить">${ic('move')}</button><span class="z"></span></div>` : `<doc-page n="${i}"></doc-page>`).join('')}`);
def('scroll-bar', `:host{display:flex;flex-direction:column;align-items:center;width:18px;background:#f1f1f1;padding:5px 0 4px}
i{width:0;height:0;border:5px solid transparent}.u{border-top:0;border-bottom:7px solid #666}.d{border-bottom:0;border-top:7px solid #666;margin-top:auto}.t{width:9px;height:396px;border-radius:5px;background:#6b6b6b;margin-top:58px}`,
`<i class="u"></i><div class="t"></div><i class="d"></i>`);

/* ---------- status and task bars ---------- */
def('status-bar', `:host{display:flex;align-items:center;height:22px;background:#f4f4f4;padding:0 14px 0 11px;font-size:11px;white-space:nowrap}
.a{margin-left:19px;gap:3px}.f{margin-left:auto;gap:2px}.v{width:40px;height:22px}.v.on{background:#dcdcdc}.f+.v{margin-left:12px}.q{font-size:16px;width:14px;font-weight:400}
input{appearance:none;width:99px;height:12px;margin:0 3px;background:linear-gradient(#777,#777) center/100% 1px no-repeat,linear-gradient(#777,#777) center/1px 5px no-repeat}input::-webkit-slider-thumb{appearance:none;width:5px;height:11px;background:#555}.p{width:27px;margin-left:8px;justify-content:flex-end}`,
`<button>Страница 1 из 20</button><button class="a">Число слов: 1692</button><button class="a">русский</button><button class="a">${ic('access')}Специальные возможности: не поддерживаются</button><button class="f">${ic('focus')}Фокусировка</button><button class="v">${ic('read')}</button><button class="v on">${ic('print')}</button><button class="v">${ic('web')}</button><button class="q">−</button><input type="range" min="0" max="100" value="16" aria-label="Масштаб"><button class="q">+</button><button class="p">40 %</button>`);
def('task-bar', `:host{display:flex;height:8px;overflow:hidden;background:linear-gradient(90deg,#1f3540,#1b2440);padding:1px 71px 0 52px;gap:3px;align-items:flex-start;color:#fff}
button{width:46px;height:12px;background:#4d5c66;border:1px solid #84919a}.on{background:#74828b;border-color:#aab4ba}span{margin-left:auto;font-size:11px;line-height:15px}`,
`<button></button><button></button><button></button><button></button><button></button><button class="on"></button><span>14:24</span>`);
def('word-app', `:host{display:flex;flex-direction:column;height:100vh}.m{flex:1;min-height:0;display:flex}`,
`<title-bar></title-bar><ribbon-tabs></ribbon-tabs><ribbon-bar></ribbon-bar><ruler-top></ruler-top><div class="m"><ruler-left></ruler-left><doc-canvas></doc-canvas><scroll-bar></scroll-bar></div><status-bar></status-bar><task-bar></task-bar>`);
</script>
</body>
</html>
